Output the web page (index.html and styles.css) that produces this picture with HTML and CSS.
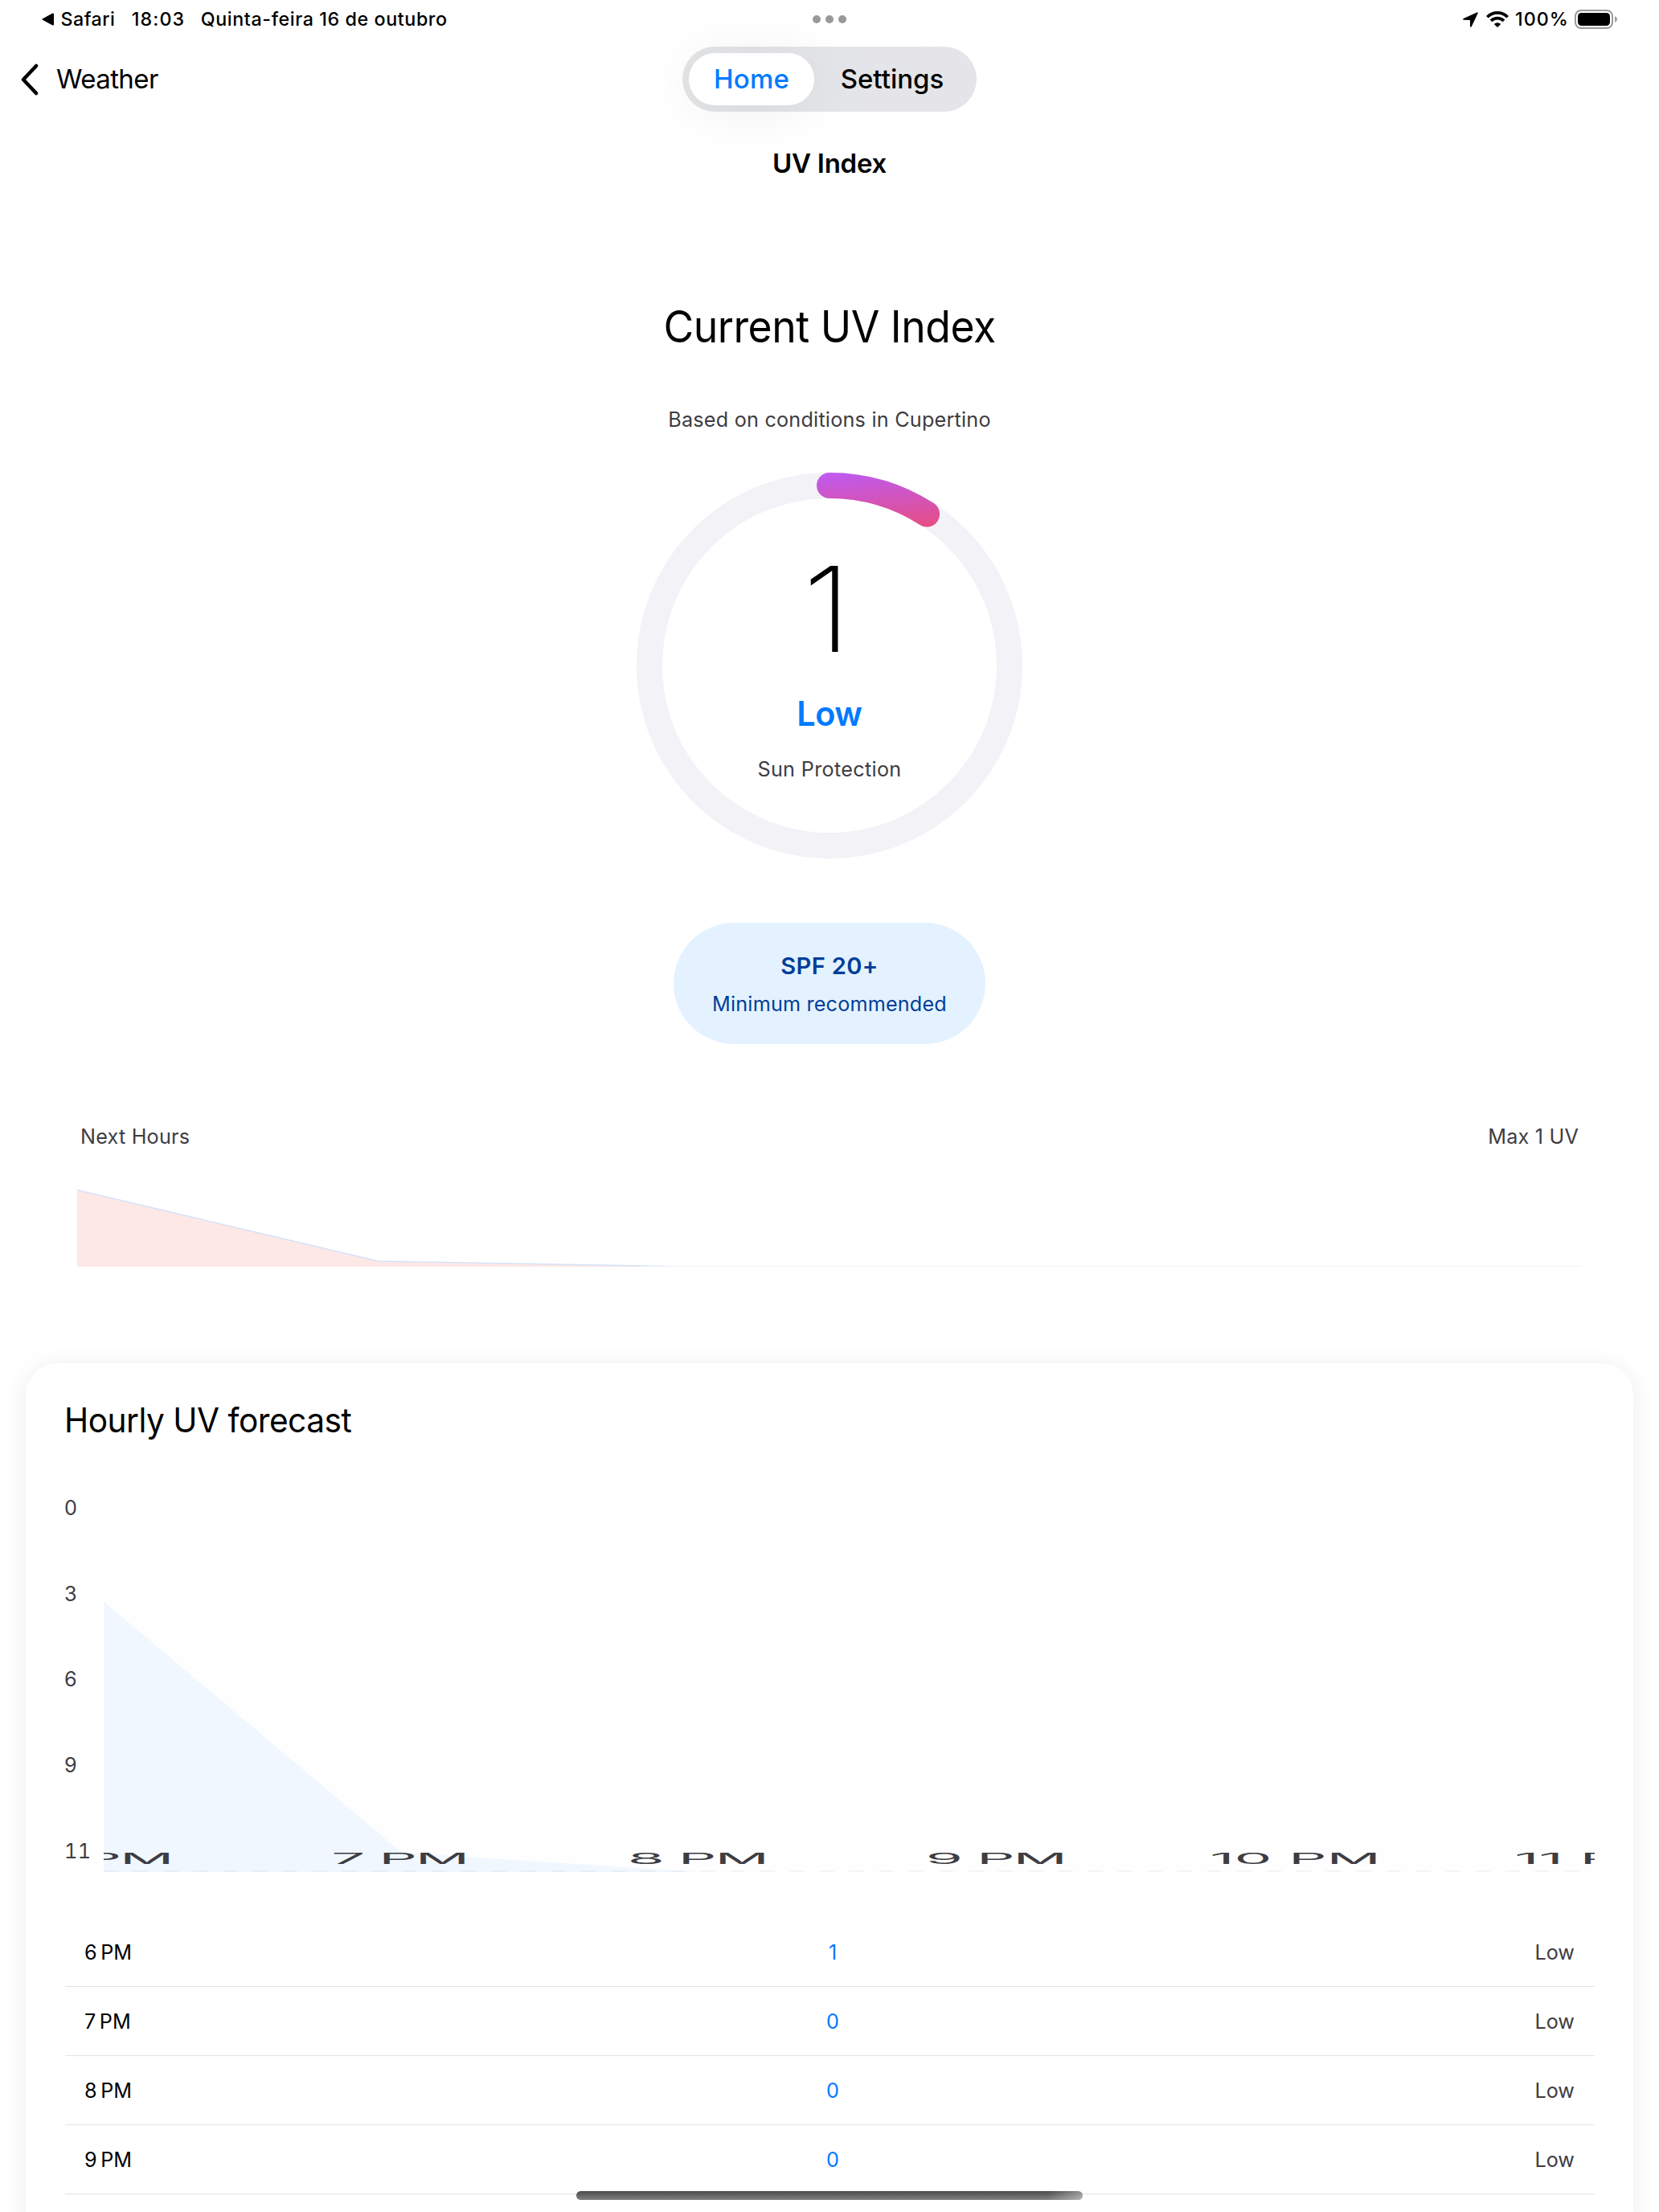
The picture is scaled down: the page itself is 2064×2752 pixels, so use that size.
FILE: index.html
```html
<!DOCTYPE html>
<html lang="pt">
<head>
<meta charset="utf-8">
<title>UV Index</title>
<link rel="stylesheet" href="styles.css">
</head>
<body>
<header class="status">
  <div class="status-left">
    <svg width="15" height="16" viewBox="0 0 15 16"><path d="M1 7.200 13.400.6Q15 0 15 1.600V14.400Q15 16 13.400 15.400L1 8.800Q-.4 8 1 7.200Z"/></svg>
    <span class="s-app">Safari</span>
    <span class="s-time">18:03</span>
    <span class="s-date">Quinta-feira 16 de outubro</span>
  </div>
  <div class="dots"><i></i><i></i><i></i></div>
  <div class="status-right">
    <svg width="19" height="19" viewBox="0 0 19 19"><path d="M18.500 1.700C19 .6 18.300 0 17.300.5L.8 8.100C-.3 8.700-.1 9.800 1.100 9.800L8.300 9.900Q8.900 9.900 8.900 10.500L9 17.500C9 18.900 10.200 19.100 10.800 18Z"/></svg>
    <svg class="wifi" width="28" height="20" viewBox="0 0 28 20" fill="none" stroke="#000" stroke-width="3.700"><path d="M1.300 7.200Q6.600 1.900 14 1.900T26.700 7.200"/><path d="M6 11.800Q9.400 8.600 14 8.600T22 11.800"/><path d="M14 20 9.800 15.900Q11.500 14.200 14 14.200T18.200 15.900Z" fill="#000" stroke="none"/></svg>
    <span class="s-pct">100%</span>
    <svg class="battery" width="54" height="24" viewBox="0 0 54 24"><rect x="1" y="1" width="46" height="22" rx="7" fill="none" stroke="#9b9b9b" stroke-width="2"/><rect x="4" y="4" width="40" height="16" rx="4.500"/><path d="M50 8Q53 9.300 53 12T50 16Z" fill="#9b9b9b"/></svg>
  </div>
</header>
<nav class="nav">
  <div class="nav-back">
    <svg width="24" height="40" viewBox="0 0 24 40"><path d="M20 3 4 20 20 37" fill="none" stroke="#000" stroke-width="4.500" stroke-linecap="round" stroke-linejoin="round"/></svg>
    <span class="t-weather">Weather</span>
  </div>
  <div class="tabs"><div class="tab active"><span class="t-home">Home</span></div><div class="tab"><span>Settings</span></div></div>
</nav>
<h1 class="title">UV Index</h1>
<main>
  <h2 class="current">Current UV Index</h2>
  <p class="based">Based on conditions in Cupertino</p>
  <section class="gauge">
    <svg width="480" height="480" viewBox="0 0 480 480" fill="none" stroke-width="32">
      <defs><linearGradient id="uv" gradientUnits="userSpaceOnUse" x1="240" y1="0" x2="246" y2="78"><stop offset="0" stop-color="#bf5af2"/><stop offset="1" stop-color="#e64d80"/></linearGradient></defs>
      <circle cx="240" cy="240" r="224" stroke="#f2f2f7"/>
      <path d="M240 16A224 224 0 0 1 361.100 51.560" stroke="url(#uv)" stroke-linecap="round"/>
    </svg>
    <div class="gauge-text">
      <span class="value">1</span>
      <span class="level">Low</span>
      <span class="protect">Sun Protection</span>
    </div>
  </section>
  <section class="spf">
    <span class="spf-value">SPF 20+</span>
    <span class="spf-note">Minimum recommended</span>
  </section>
  <section class="next">
    <div class="next-head"><span>Next Hours</span><span>Max 1 UV</span></div>
    <svg class="next-chart" width="1872" height="98" viewBox="0 0 1872 98">
      <path d="M0 2.500 374.400 91 748.800 98H0Z" fill="#fde8e6"/>
      <path d="M0 2.500 374.400 91 748.800 97.700" fill="none" stroke="#d3e2fa" stroke-width="1.400"/>
      <path d="M700 97.500H1872" stroke="#eef2fa"/>
    </svg>
  </section>
  <section class="card">
    <h3 class="hourly">Hourly UV forecast</h3>
    <div class="plot">
      <div class="scale"><span>0</span><span>3</span><span>6</span><span>9</span><span class="eleven">11</span></div>
      <svg width="1855" height="481" viewBox="0 0 1855 481">
        <rect width="1855" height="481" fill="#fefefe"/>
        <path d="M0 144.500 371 457 742 481H0Z" fill="#f0f7ff"/>
        <path d="M0 480H1855" stroke="#000" stroke-opacity=".05" stroke-width="1.500" stroke-dasharray="18.550"/>
        <g class="x-labels" transform="scale(4.100 1)">
          <text x="-.4" y="471.500">6 PM</text>
          <text x="89.800" y="471.500">7 PM</text>
          <text x="180.200" y="471.500">8 PM</text>
          <text x="270.700" y="471.500">9 PM</text>
          <text class="wide" x="361.600" y="471.500">10 PM</text>
          <text class="wide" x="452" y="471.500">11 PM</text>
        </g>
      </svg>
    </div>
    <ul class="rows">
      <li><span>6&#8239;PM</span><span class="uv">1</span><span class="lv">Low</span></li>
      <li><span>7&#8239;PM</span><span class="uv">0</span><span class="lv">Low</span></li>
      <li><span>8&#8239;PM</span><span class="uv">0</span><span class="lv">Low</span></li>
      <li><span>9&#8239;PM</span><span class="uv">0</span><span class="lv">Low</span></li>
    </ul>
  </section>
</main>
<div class="home-bar"></div>
</body>
</html>
```
FILE: styles.css
```css
* { box-sizing: border-box; margin: 0; padding: 0; }
html, body { width: 2064px; height: 2752px; overflow: hidden; }
body { position: relative; background: #fff; color: #000; font-family: Inter, "Liberation Sans", sans-serif; font-weight: 400; white-space: nowrap; }
h1, h2, h3 { font-weight: 400; }
svg { display: block; flex: none; }
ul { list-style: none; }

/* Status bar */
.status { display: grid; grid-template-columns: 1fr auto 1fr; align-items: center; height: 48px; padding: 0 52px; font-size: 23.250px; font-weight: 500; line-height: 48px; }
.status-left, .status-right { display: flex; align-items: center; }
.status-right { justify-content: flex-end; }
.s-app { margin-left: 8.500px; letter-spacing: .47px; }
.s-time { margin-left: 20.500px; letter-spacing: 1.100px; }
.s-date { margin-left: 19.500px; letter-spacing: .6px; }
.s-pct { letter-spacing: 1.050px; }
.dots { display: flex; gap: 6px; }
.dots i { width: 10px; height: 10px; border-radius: 50%; background: #999; }
.wifi { margin: 0 8px 0 10px; }
.battery { margin-left: 7px; margin-right: -1px; }

/* Navigation */
.nav { display: grid; grid-template-columns: 1fr 366px 1fr; align-items: center; height: 81px; margin-top: 10px; font-size: 33px; line-height: 40px; }
.nav-back { display: flex; align-items: center; padding-left: 25px; }
.t-weather { margin: -2px 0 0 21px; letter-spacing: -.6px; }
.tabs { display: flex; height: 81px; padding: 8px; border-radius: 41px; background: linear-gradient(90deg, #e3e5e7, #e5e5e9); font-weight: 500; }
.tab { display: flex; align-items: center; justify-content: center; flex: 1; padding-bottom: 2px; }
.tab.active { flex: none; width: 156px; border-radius: 33px; background: #fff; color: #007aff; box-shadow: 0 4px 70px rgba(0, 0, 0, .065); }
.t-home { letter-spacing: .2px; }

.title { margin-top: 44px; text-align: center; font-size: 33px; font-weight: 600; line-height: 40px; letter-spacing: -.25px; }
.current { margin-top: 153px; text-align: center; font-size: 54.300px; line-height: 60px; letter-spacing: -.5px; transform: scaleX(.951); }
.based { margin-top: 70px; text-align: center; font-size: 25.200px; line-height: 32px; letter-spacing: .22px; color: #3d3d43; }

/* Gauge */
.gauge { display: grid; width: 480px; height: 480px; margin: 50px auto 0; }
.gauge > * { grid-area: 1 / 1; }
.gauge-text { display: flex; flex-direction: column; align-items: center; padding-top: 90px; }
.value { margin-right: 6px; font-size: 147px; font-weight: 200; line-height: 160px; transform: scaleX(1.080); }
.level { margin-top: 25px; color: #007aff; font-size: 42.600px; font-weight: 600; line-height: 50px; letter-spacing: -.5px; transform: scaleX(.97); }
.protect { margin-top: 28px; color: #3d3d43; font-size: 25.200px; line-height: 32px; letter-spacing: .32px; }

.spf { display: flex; flex-direction: column; align-items: center; width: 388px; height: 151px; margin: 80px auto 0; padding-top: 36px; border-radius: 76px; background: #e4f2ff; color: #003e99; }
.spf-value { font-size: 29.100px; font-weight: 600; line-height: 36px; letter-spacing: .35px; }
.spf-note { margin-top: 13px; font-size: 25.200px; line-height: 32px; letter-spacing: .18px; }

.next { padding: 99px 96px 0; }
.next-head { display: flex; justify-content: space-between; padding: 0 4px; color: #3d3d43; font-size: 25.200px; line-height: 32px; letter-spacing: .2px; }
.next-chart { margin-top: 48px; }

/* Hourly forecast */
.card { height: 1100px; margin: 120px 32px 0; padding: 46px 48px 0; border-radius: 40px; background: #fff; box-shadow: 0 4px 32px rgba(0, 0, 0, .08); }
.hourly { font-size: 42.600px; line-height: 50px; letter-spacing: -.5px; transform: scaleX(.953); transform-origin: left; }
.plot { display: flex; margin-top: 56px; }
.scale { width: 49px; padding-top: 12px; color: #3d3d43; font-size: 25.200px; }
.scale span { display: block; height: 106.600px; line-height: 32px; }
.scale .eleven { height: 32px; padding-top: 1px; font-variant-numeric: tabular-nums; letter-spacing: .3px; }
.x-labels { fill: #3d3d43; font-size: 18.200px; letter-spacing: -.5px; text-anchor: middle; }
.x-labels .wide { letter-spacing: -.05px; }
.rows { width: 1903px; margin-top: 57px; margin-left: 1px; }
.rows li { display: grid; grid-template-columns: 1fr auto 1fr; align-items: center; height: 86px; padding: 0 25px 0 24px; border-bottom: 1px solid #e3e3e3; font-size: 25.200px; }
.uv { padding-left: 8px; color: #007aff; }
.lv { color: #3d3d43; text-align: right; }

.home-bar { position: absolute; left: 717px; top: 2726px; width: 630px; height: 11px; border-radius: 6px; background: linear-gradient(100deg, transparent 93%, rgba(255, 255, 255, .4)), linear-gradient(#4a4a4a, #828282); }
```
